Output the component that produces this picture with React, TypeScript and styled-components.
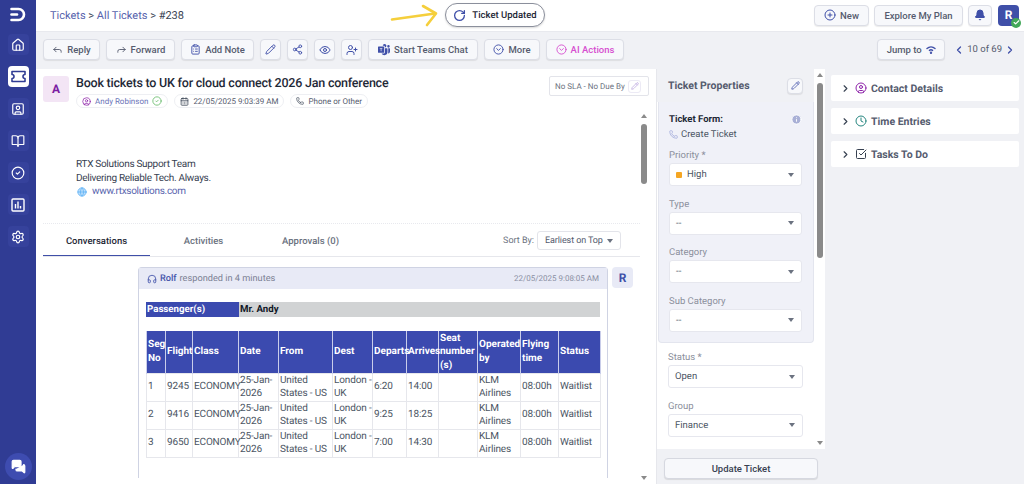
import React from 'react';
import styled, { createGlobalStyle } from 'styled-components';
import {
  Bell,
  BookOpen,
  CheckSquare,
  ChevronLeft,
  ChevronRight,
  CircleCheck,
  CircleChevronDown,
  CircleUser,
  Clock,
  ClipboardList,
  Eye,
  Forward,
  Globe,
  Headphones,
  Home,
  Info,
  MessagesSquare,
  Pencil,
  Phone,
  PlusCircle,
  RotateCw,
  Reply,
  Settings,
  Share2,
  UserPlus,
  CalendarDays,
  SquareUser,
  Check
} from 'lucide-react';
import { BsMicrosoftTeams } from 'react-icons/bs';

const GlobalStyle = createGlobalStyle`
  html, body {
    margin: 0;
    padding: 0;
    height: 100%;
    overflow: hidden;
    font-family: Roboto, "Liberation Sans", sans-serif;
    text-rendering: geometricPrecision;
    color: #374151;
    background: #ffffff;
  }
  * { box-sizing: border-box; }
`;

const rows = [
  ['1', '9245', 'ECONOMY', '25-Jan-2026', 'United States - US', 'London - UK', '6:20', '14:00', '', 'KLM Airlines', '08:00h', 'Waitlist'],
  ['2', '9416', 'ECONOMY', '25-Jan-2026', 'United States - US', 'London - UK', '9:25', '18:25', '', 'KLM Airlines', '08:00h', 'Waitlist'],
  ['3', '9650', 'ECONOMY', '25-Jan-2026', 'United States - US', 'London - UK', '7:00', '14:30', '', 'KLM Airlines', '08:00h', 'Waitlist']
];
const heads = ['Seg No', 'Flight', 'Class', 'Date', 'From', 'Dest', 'Departs', 'Arrives', 'Seat number (s)', 'Operated by', 'Flying time', 'Status'];
const colWidths = [19, 27, 46, 40, 54, 40, 34, 32, 39, 43, 38, 42];

function LogoMark() {
  return (
    <svg width="16" height="15" viewBox="0 0 16 15" fill="none" stroke="#fff" strokeWidth="2.6" strokeLinecap="round">
      <path d="M1.5 2h7a5.5 5.5 0 0 1 0 11h-7" />
      <path d="M1.5 7.5h5.5" />
    </svg>
  );
}

function TicketGlyph() {
  return (
    <svg width="15" height="13" viewBox="0 0 15 13" fill="none" stroke="#303c94" strokeWidth="1.6" strokeLinejoin="round">
      <path d="M1 1.5h13v3a2 2 0 0 0 0 4v3H1v-3a2 2 0 0 0 0-4z" />
    </svg>
  );
}

function ChartGlyph() {
  return (
    <svg width="14" height="14" viewBox="0 0 14 14" fill="none" stroke="#fff" strokeWidth="1.4">
      <rect x="1" y="1" width="12" height="12" rx="1" />
      <path d="M4.5 10.5V6M7 10.5V3.5M9.5 10.5V8" />
    </svg>
  );
}

function JumpIcon() {
  return (
    <svg width="10" height="8" viewBox="0 0 10 8" fill="none" stroke="#3f4fa8" strokeWidth="1.4" strokeLinecap="round">
      <path d="M1 2.6a6 6 0 0 1 8 0" />
      <path d="M3.4 4.4a2.6 2.6 0 0 1 3.2 0" />
      <circle cx="5" cy="6.8" r=".5" />
    </svg>
  );
}

function Scrollbar({ thumb }: { thumb: number }) {
  return (
    <ScrollTrack>
      <ArrowUp />
      <Thumb $height={thumb} />
      <ArrowDown />
    </ScrollTrack>
  );
}

function SelectField({ label, value, dot }: { label: string; value: string; dot?: boolean }) {
  return (
    <Field>
      <FieldLabel>{label}</FieldLabel>
      <SelectBox>
        {dot && <PriorityDot />}
        <span>{value}</span>
        <Caret />
      </SelectBox>
    </Field>
  );
}

export default function App() {
  return (
    <>
      <GlobalStyle />
      <Page>
        <Sidebar>
          <LogoSlot>
            <LogoMark />
          </LogoSlot>
          <NavBtn><Home size={14} /></NavBtn>
          <NavBtn $active><TicketGlyph /></NavBtn>
          <NavBtn><SquareUser size={14} /></NavBtn>
          <NavBtn><BookOpen size={14} /></NavBtn>
          <NavBtn><CircleCheck size={14} /></NavBtn>
          <NavBtn><ChartGlyph /></NavBtn>
          <NavBtn><Settings size={14} /></NavBtn>
          <ChatBubble><MessagesSquare size={15} fill="#fff" /></ChatBubble>
        </Sidebar>

        <Column>
          <TopBar>
            <Crumbs>
              <CrumbLink>Tickets</CrumbLink> &gt; <CrumbLink>All Tickets</CrumbLink> &gt; #238
            </Crumbs>
            <ArrowMark width="50" height="24" viewBox="0 0 50 24" fill="none" stroke="#f5cf3c" strokeLinecap="round" strokeLinejoin="round">
              <path d="M2 15.5 L45 9.5" strokeWidth="2.6" />
              <path d="M33 2 L46 9.5 L37 21" strokeWidth="2.6" />
            </ArrowMark>
            <UpdatedPill>
              <RotateCw size={13} color="#3f4fa8" strokeWidth={2.4} />
              Ticket Updated
            </UpdatedPill>
            <TopActions>
              <ActionBtn $w={55}><PlusCircle size={12} color="#3f4fa8" />New</ActionBtn>
              <ActionBtn $w={89}>Explore My Plan</ActionBtn>
              <SquareBtn $w={24}><Bell size={12} color="#3f4fa8" fill="#3f4fa8" /></SquareBtn>
              <UserBadge>
                R
                <OnlineDot><Check size={7} color="#fff" strokeWidth={4} /></OnlineDot>
              </UserBadge>
            </TopActions>
          </TopBar>

          <Toolbar>
            <ActionBtn $w={57}><Reply size={11} />Reply</ActionBtn>
            <ActionBtn $w={69}><Forward size={11} />Forward</ActionBtn>
            <ActionBtn $w={73}><ClipboardList size={11} color="#3f4fa8" />Add Note</ActionBtn>
            <SquareBtn $w={21}><Pencil size={11} color="#3f4fa8" /></SquareBtn>
            <SquareBtn $w={21}><Share2 size={11} color="#3f4fa8" /></SquareBtn>
            <SquareBtn $w={21}><Eye size={12} color="#3f4fa8" /></SquareBtn>
            <SquareBtn $w={21}><UserPlus size={12} color="#3f4fa8" /></SquareBtn>
            <ActionBtn $w={110}><BsMicrosoftTeams size={12} color="#3f4fa8" />Start Teams Chat</ActionBtn>
            <ActionBtn $w={56}><CircleChevronDown size={11} color="#3f4fa8" />More</ActionBtn>
            <ActionBtn $w={78} $accent><CircleChevronDown size={11} />AI Actions</ActionBtn>
            <ToolbarRight>
              <ActionBtn $w={68}>Jump to <JumpIcon /></ActionBtn>
              <Pager>
                <ChevronLeft size={12} color="#3f4fa8" strokeWidth={2.5} />
                10 of 69
                <ChevronRight size={12} color="#3f4fa8" strokeWidth={2.5} />
              </Pager>
            </ToolbarRight>
          </Toolbar>

          <Workspace>
            <MainPanel>
              <TicketHead>
                <RequesterAvatar>A</RequesterAvatar>
                <TicketTitleBlock>
                  <TicketTitle>Book tickets to UK for cloud connect 2026 Jan conference</TicketTitle>
                  <ChipRow>
                    <Chip $link>
                      <CircleUser size={9} color="#8e24aa" />
                      Andy Robinson
                      <CircleCheck size={10} color="#66bb6a" />
                    </Chip>
                    <Chip><CalendarDays size={9} color="#374151" />22/05/2025 9:03:39 AM</Chip>
                    <Chip><Phone size={8} color="#374151" />Phone or Other</Chip>
                  </ChipRow>
                </TicketTitleBlock>
                <SlaBox>
                  No SLA - No Due By
                  <SlaEdit><Pencil size={8} color="#b39ddb" /></SlaEdit>
                </SlaBox>
              </TicketHead>

              <ThreadArea>
                <Thread>
                  <Signature>
                    <div>RTX Solutions Support Team</div>
                    <div>Delivering Reliable Tech. Always.</div>
                    <SiteLine>
                      <Globe size={10} color="#64b5f6" fill="#bbdefb" />
                      <CrumbLink>www.rtxsolutions.com</CrumbLink>
                    </SiteLine>
                  </Signature>

                  <TabBar>
                    <Tab $active>Conversations</Tab>
                    <Tab>Activities</Tab>
                    <Tab>Approvals (0)</Tab>
                    <SortWrap>
                      Sort By:
                      <SortSelect>Earliest on Top<Caret /></SortSelect>
                    </SortWrap>
                  </TabBar>

                  <ConversationRow>
                    <MessageCard>
                      <MessageHead>
                        <Responder>
                          <Headphones size={10} color="#3f4fa8" />
                          <strong>Rolf</strong> responded in 4 minutes
                        </Responder>
                        <MessageTime>22/05/2025 9:08:05 AM</MessageTime>
                      </MessageHead>
                      <MessageBody>
                        <PassengerRow>
                          <PassengerLabel>Passenger(s)</PassengerLabel>
                          <PassengerName>Mr. Andy</PassengerName>
                        </PassengerRow>
                        <FlightTable>
                          <colgroup>
                            {colWidths.map((w, i) => (
                              <col key={i} style={{ width: w }} />
                            ))}
                          </colgroup>
                          <thead>
                            <tr>
                              {heads.map((h) => (
                                <HeadCell key={h}>{h}</HeadCell>
                              ))}
                            </tr>
                          </thead>
                          <tbody>
                            {rows.map((row) => (
                              <tr key={row[0]}>
                                {row.map((cell, i) => (
                                  <BodyCell key={i}>{cell}</BodyCell>
                                ))}
                              </tr>
                            ))}
                          </tbody>
                        </FlightTable>
                      </MessageBody>
                    </MessageCard>
                    <AgentAvatar>R</AgentAvatar>
                  </ConversationRow>
                </Thread>
                <Scrollbar thumb={60} />
              </ThreadArea>
            </MainPanel>

            <PropsPanel>
              <PropsScroll>
                <PropsForm>
                  <PropsHead>
                    Ticket Properties
                    <SquareBtn $w={16} $h={16}><Pencil size={9} color="#3f4fa8" /></SquareBtn>
                  </PropsHead>
                  <PropsCard>
                    <FormTitle>
                      Ticket Form:
                      <Info size={11} color="#fff" fill="#a9b0d6" />
                    </FormTitle>
                    <FormName><Phone size={9} color="#9fa8da" />Create Ticket</FormName>
                    <SelectField label="Priority *" value="High" dot />
                    <SelectField label="Type" value="--" />
                    <SelectField label="Category" value="--" />
                    <SelectField label="Sub Category" value="--" />
                  </PropsCard>
                  <PropsPlain>
                    <SelectField label="Status *" value="Open" />
                    <SelectField label="Group" value="Finance" />
                  </PropsPlain>
                </PropsForm>
                <Scrollbar thumb={175} />
              </PropsScroll>
              <PropsFooter>
                <UpdateBtn>Update Ticket</UpdateBtn>
              </PropsFooter>
            </PropsPanel>

            <SidePanel>
              <SideCard>
                <ChevronRight size={11} color="#374151" strokeWidth={2.5} />
                <CircleUser size={12} color="#8e24aa" />
                Contact Details
              </SideCard>
              <SideCard>
                <ChevronRight size={11} color="#374151" strokeWidth={2.5} />
                <Clock size={12} color="#26867f" />
                Time Entries
              </SideCard>
              <SideCard>
                <ChevronRight size={11} color="#374151" strokeWidth={2.5} />
                <CheckSquare size={12} color="#374151" />
                Tasks To Do
              </SideCard>
            </SidePanel>
          </Workspace>
        </Column>
      </Page>
    </>
  );
}

const Page = styled.div`
  display: flex;
  width: 1024px;
  height: 484px;
  overflow: hidden;
`;

const Sidebar = styled.nav`
  width: 36px;
  flex-shrink: 0;
  background: #303c94;
  display: flex;
  flex-direction: column;
  align-items: center;
  padding-top: 7px;
  gap: 11px;
`;

const LogoSlot = styled.div`
  height: 15px;
  margin-bottom: 1px;
  display: flex;
  align-items: center;
`;

const NavBtn = styled.div<{ $active?: boolean }>`
  width: 21px;
  height: 21px;
  border-radius: 4px;
  display: flex;
  align-items: center;
  justify-content: center;
  background: ${(p) => (p.$active ? '#ffffff' : '#36429c')};
  color: ${(p) => (p.$active ? '#303c94' : '#ffffff')};
`;

const ChatBubble = styled.div`
  margin-top: auto;
  margin-bottom: 4px;
  width: 27px;
  height: 27px;
  border-radius: 50%;
  background: #3e4cb0;
  color: #3e4cb0;
  display: flex;
  align-items: center;
  justify-content: center;

  svg {
    stroke: #fff;
  }
`;

const Column = styled.div`
  flex: 1;
  min-width: 0;
  display: flex;
  flex-direction: column;
`;

const TopBar = styled.header`
  height: 32px;
  flex-shrink: 0;
  background: #fff;
  display: flex;
  align-items: center;
  padding: 0 5px 1px 14px;
  border-bottom: 1px solid #e8e9ee;
`;

const Crumbs = styled.div`
  width: 340px;
  font-size: 11px;
  color: #374151;
`;

const CrumbLink = styled.span`
  color: #5763ad;
`;

const ArrowMark = styled.svg`
  margin: 2px 0 0 0;
  flex-shrink: 0;
`;

const UpdatedPill = styled.div`
  margin-left: 5px;
  width: 100px;
  height: 24px;
  border-radius: 12px;
  border: 1px solid #8b8f9c;
  box-shadow: 0 1px 2px rgba(0, 0, 0, 0.15);
  display: flex;
  align-items: center;
  justify-content: center;
  gap: 6px;
  font-size: 9.5px;
  font-weight: 500;
  color: #1f2937;
  background: #fff;
`;

const TopActions = styled.div`
  margin-left: auto;
  display: flex;
  align-items: center;
  gap: 5px;
`;

const ActionBtn = styled.button<{ $accent?: boolean; $w: number }>`
  width: ${(p) => p.$w}px;
  height: 21px;
  padding: 0;
  background: #f7f8fb;
  border: 1px solid #dcdee6;
  border-radius: 4px;
  box-shadow: 0 1px 1px rgba(0, 0, 0, 0.08);
  display: flex;
  align-items: center;
  justify-content: center;
  gap: 4px;
  flex-shrink: 0;
  font-family: inherit;
  font-size: 9.5px;
  font-weight: 500;
  white-space: nowrap;
  color: ${(p) => (p.$accent ? '#d64fd0' : '#555b6e')};
`;

const SquareBtn = styled.button<{ $w: number; $h?: number }>`
  width: ${(p) => p.$w}px;
  height: ${(p) => p.$h ?? 21}px;
  padding: 0;
  background: #f7f8fb;
  border: 1px solid #dcdee6;
  border-radius: 4px;
  box-shadow: 0 1px 1px rgba(0, 0, 0, 0.08);
  display: flex;
  align-items: center;
  justify-content: center;
  flex-shrink: 0;
`;

const UserBadge = styled.div`
  position: relative;
  width: 21px;
  height: 21px;
  margin-left: 1px;
  border-radius: 4px;
  background: #3f4fa8;
  color: #fff;
  font-size: 12px;
  font-weight: 700;
  display: flex;
  align-items: center;
  justify-content: center;
`;

const OnlineDot = styled.span`
  position: absolute;
  right: -2px;
  bottom: -2px;
  width: 10px;
  height: 10px;
  border-radius: 50%;
  background: #43a85a;
  display: flex;
  align-items: center;
  justify-content: center;
`;

const Toolbar = styled.div`
  height: 37px;
  flex-shrink: 0;
  background: #f0f1f5;
  display: flex;
  align-items: center;
  gap: 6px;
  padding: 0 8px 2px 7px;
`;

const ToolbarRight = styled.div`
  margin-left: auto;
  display: flex;
  align-items: center;
  gap: 8px;
`;

const Pager = styled.div`
  display: flex;
  align-items: center;
  gap: 2px;
  font-size: 9.5px;
  color: #555b6e;
`;

const Workspace = styled.div`
  flex: 1;
  min-height: 0;
  display: flex;
`;

const MainPanel = styled.main`
  width: 621px;
  flex-shrink: 0;
  background: #fff;
  display: flex;
  flex-direction: column;
  border-right: 1px solid #e6e7ec;
`;

const TicketHead = styled.div`
  height: 41px;
  flex-shrink: 0;
  display: flex;
  padding: 7px 7px 0;
  gap: 7px;
`;

const RequesterAvatar = styled.div`
  width: 26px;
  height: 26px;
  border-radius: 3px;
  background: #f3e5f5;
  color: #7b1fa2;
  font-size: 12px;
  font-weight: 700;
  display: flex;
  align-items: center;
  justify-content: center;
`;

const TicketTitleBlock = styled.div`
  flex: 1;
  min-width: 0;
`;

const TicketTitle = styled.div`
  font-size: 12.5px;
  font-weight: 500;
  letter-spacing: -0.22px;
  line-height: 15px;
  color: #1f2937;
`;

const ChipRow = styled.div`
  display: flex;
  gap: 6px;
  margin-top: 3px;
`;

const Chip = styled.div<{ $link?: boolean }>`
  height: 14px;
  padding: 0 5px;
  border: 1px solid #eeeff3;
  border-radius: 7px;
  display: flex;
  align-items: center;
  gap: 4px;
  font-size: 8px;
  white-space: nowrap;
  color: ${(p) => (p.$link ? '#6b74b8' : '#555b6e')};
`;

const SlaBox = styled.div`
  width: 100px;
  height: 20px;
  padding: 0 7px 0 5px;
  border: 1px solid #e3e4ea;
  border-radius: 2px;
  display: flex;
  align-items: center;
  justify-content: space-between;
  font-size: 8px;
  white-space: nowrap;
  color: #6b7280;
`;

const SlaEdit = styled.span`
  width: 13px;
  height: 13px;
  border: 1px solid #eceaf5;
  border-radius: 3px;
  display: flex;
  align-items: center;
  justify-content: center;
`;

const ThreadArea = styled.div`
  flex: 1;
  min-height: 0;
  display: flex;
`;

const Thread = styled.div`
  width: 604px;
  padding-left: 7px;
  display: flex;
  flex-direction: column;
`;

const Signature = styled.div`
  height: 114px;
  flex-shrink: 0;
  padding: 48px 0 0 33px;
  font-size: 10px;
  letter-spacing: -0.3px;
  line-height: 13.5px;
  color: #374151;
  border-bottom: 1px dotted #e8e9ee;
`;

const SiteLine = styled.div`
  display: flex;
  align-items: center;
  gap: 5px;
  margin-left: 1px;
`;

const TabBar = styled.div`
  height: 33px;
  flex-shrink: 0;
  display: flex;
  border-bottom: 1px solid #e6e7ec;
`;

const Tab = styled.div<{ $active?: boolean }>`
  width: 107px;
  padding-top: 3px;
  display: flex;
  align-items: center;
  justify-content: center;
  font-size: 9.5px;
  font-weight: 500;
  color: ${(p) => (p.$active ? '#1f2937' : '#6b7280')};
  border-bottom: ${(p) => (p.$active ? '1px solid #3f4fa8' : '0')};
`;

const SortWrap = styled.div`
  margin-left: auto;
  margin-right: 19px;
  padding-top: 1px;
  display: flex;
  align-items: center;
  gap: 3px;
  font-size: 9px;
  color: #6b7280;
`;

const SortSelect = styled.div`
  position: relative;
  width: 84px;
  height: 19px;
  padding-left: 7px;
  border: 1px solid #e3e4ea;
  border-radius: 3px;
  display: flex;
  align-items: center;
  font-size: 9px;
  letter-spacing: -0.1px;
  color: #555b6e;
`;

const ConversationRow = styled.div`
  flex: 1;
  min-height: 0;
  display: flex;
  gap: 4px;
  padding: 10px 0 6px 95px;
`;

const MessageCard = styled.div`
  width: 470px;
  border: 1px solid #cfd3e3;
  border-bottom: 0;
  border-radius: 4px 4px 0 0;
`;

const MessageHead = styled.div`
  height: 21px;
  background: #e8eaf6;
  display: flex;
  align-items: center;
  justify-content: space-between;
  padding: 0 8px 0 8px;
`;

const Responder = styled.div`
  display: flex;
  align-items: center;
  gap: 3px;
  font-size: 9.2px;
  color: #7b8093;

  strong {
    color: #4655ab;
    font-weight: 500;
  }
`;

const MessageTime = styled.div`
  font-size: 8px;
  color: #8a8fa3;
`;

const MessageBody = styled.div`
  padding: 13px 7px 0;
`;

const PassengerRow = styled.div`
  display: flex;
  height: 15px;
  width: 454px;
  font-size: 9.7px;
  font-weight: 700;
  line-height: 16px;
`;

const PassengerLabel = styled.div`
  width: 93px;
  padding-left: 1px;
  background: #3b4aaf;
  color: #fff;
`;

const PassengerName = styled.div`
  flex: 1;
  padding-left: 1px;
  background: #d1d3d4;
  color: #111827;
`;

const FlightTable = styled.table`
  width: 454px;
  margin-top: 14px;
  table-layout: fixed;
  border-collapse: collapse;
  font-size: 10px;
  line-height: 13.5px;
`;

const HeadCell = styled.th`
  height: 42px;
  padding: 0 0 0 1px;
  background: #3b4aaf;
  color: #fff;
  text-align: left;
  font-weight: 700;
  border: 1px solid #c9cdea;
  border-top: 0;
  border-bottom: 0;
`;

const BodyCell = styled.td`
  height: 28px;
  padding: 0 0 0 1px;
  letter-spacing: -0.15px;
  color: #4b5563;
  border: 1px solid #e6e7ec;
`;

const AgentAvatar = styled.div`
  width: 21px;
  height: 21px;
  border-radius: 4px;
  background: #e8eaf6;
  color: #3f4fa8;
  font-size: 12px;
  font-weight: 700;
  display: flex;
  align-items: center;
  justify-content: center;
`;

const ScrollTrack = styled.div`
  width: 7px;
  flex-shrink: 0;
  display: flex;
  flex-direction: column;
  align-items: center;
`;

const ArrowUp = styled.span`
  width: 0;
  height: 0;
  margin: 4px 0 6px;
  border-left: 3.5px solid transparent;
  border-right: 3.5px solid transparent;
  border-bottom: 4px solid #8a8a8a;
`;

const ArrowDown = styled.span`
  width: 0;
  height: 0;
  margin: auto 0 4px;
  border-left: 3.5px solid transparent;
  border-right: 3.5px solid transparent;
  border-top: 4px solid #8a8a8a;
`;

const Thumb = styled.span<{ $height: number }>`
  width: 6px;
  height: ${(p) => p.$height}px;
  border-radius: 3px;
  background: #8a8a8a;
`;

const PropsPanel = styled.aside`
  width: 168px;
  flex-shrink: 0;
  display: flex;
  flex-direction: column;
  background: #fff;
`;

const PropsScroll = styled.div`
  flex: 1;
  min-height: 0;
  display: flex;
  gap: 2px;
`;

const PropsForm = styled.div`
  width: 157px;
  flex-shrink: 0;
`;

const PropsHead = styled.div`
  height: 33px;
  padding: 0 11px;
  background: #f0f1f5;
  display: flex;
  align-items: center;
  justify-content: space-between;
  font-size: 10.5px;
  font-weight: 700;
  color: #555b6e;
`;

const PropsCard = styled.div`
  height: 241px;
  margin-left: 1px;
  padding: 11px 11px 0 10px;
  background: #f0f1f8;
  border: 1px solid #e3e5ee;
  border-top: 0;
  border-radius: 0 0 4px 4px;
`;

const FormTitle = styled.div`
  height: 13px;
  display: flex;
  align-items: center;
  justify-content: space-between;
  font-size: 9.5px;
  font-weight: 700;
  color: #1f2937;
`;

const FormName = styled.div`
  height: 13px;
  margin: 2px 0 8px;
  display: flex;
  align-items: center;
  gap: 3px;
  font-size: 9.5px;
  color: #4b5563;
`;

const Field = styled.div`
  margin-bottom: 11.5px;
`;

const FieldLabel = styled.div`
  height: 13px;
  margin-bottom: 1px;
  font-size: 9.5px;
  line-height: 13px;
  color: #8b8f9c;
`;

const SelectBox = styled.div`
  position: relative;
  height: 23px;
  padding-left: 6px;
  background: #fff;
  border: 1px solid #e6e7ee;
  border-radius: 3px;
  display: flex;
  align-items: center;
  gap: 5px;
  font-size: 9.5px;
  color: #4b5563;
`;

const PriorityDot = styled.span`
  width: 6px;
  height: 6px;
  border-radius: 1px;
  background: #f5a623;
`;

const Caret = styled.span`
  position: absolute;
  right: 7px;
  top: 50%;
  margin-top: -2px;
  border-left: 3.5px solid transparent;
  border-right: 3.5px solid transparent;
  border-top: 4px solid #6b7280;
`;

const PropsPlain = styled.div`
  padding: 8px 11px 0 11px;
`;

const PropsFooter = styled.div`
  height: 35px;
  flex-shrink: 0;
  background: #f0f1f5;
  padding: 8px 7px 6px;
`;

const UpdateBtn = styled.button`
  width: 154px;
  height: 21px;
  padding: 0;
  background: #f7f8fb;
  border: 1px solid #d6d8e0;
  border-radius: 4px;
  box-shadow: 0 1px 1px rgba(0, 0, 0, 0.1);
  font-family: inherit;
  font-size: 9.5px;
  font-weight: 500;
  color: #374151;
`;

const SidePanel = styled.section`
  flex: 1;
  min-width: 0;
  background: #f0f1f5;
  display: flex;
  flex-direction: column;
  gap: 7px;
  padding: 6px 5px 0 6px;
`;

const SideCard = styled.div`
  height: 26px;
  background: #fff;
  border-radius: 2px;
  display: flex;
  align-items: center;
  gap: 4px;
  padding-left: 9px;
  font-size: 10.5px;
  font-weight: 700;
  color: #555b6e;
`;
